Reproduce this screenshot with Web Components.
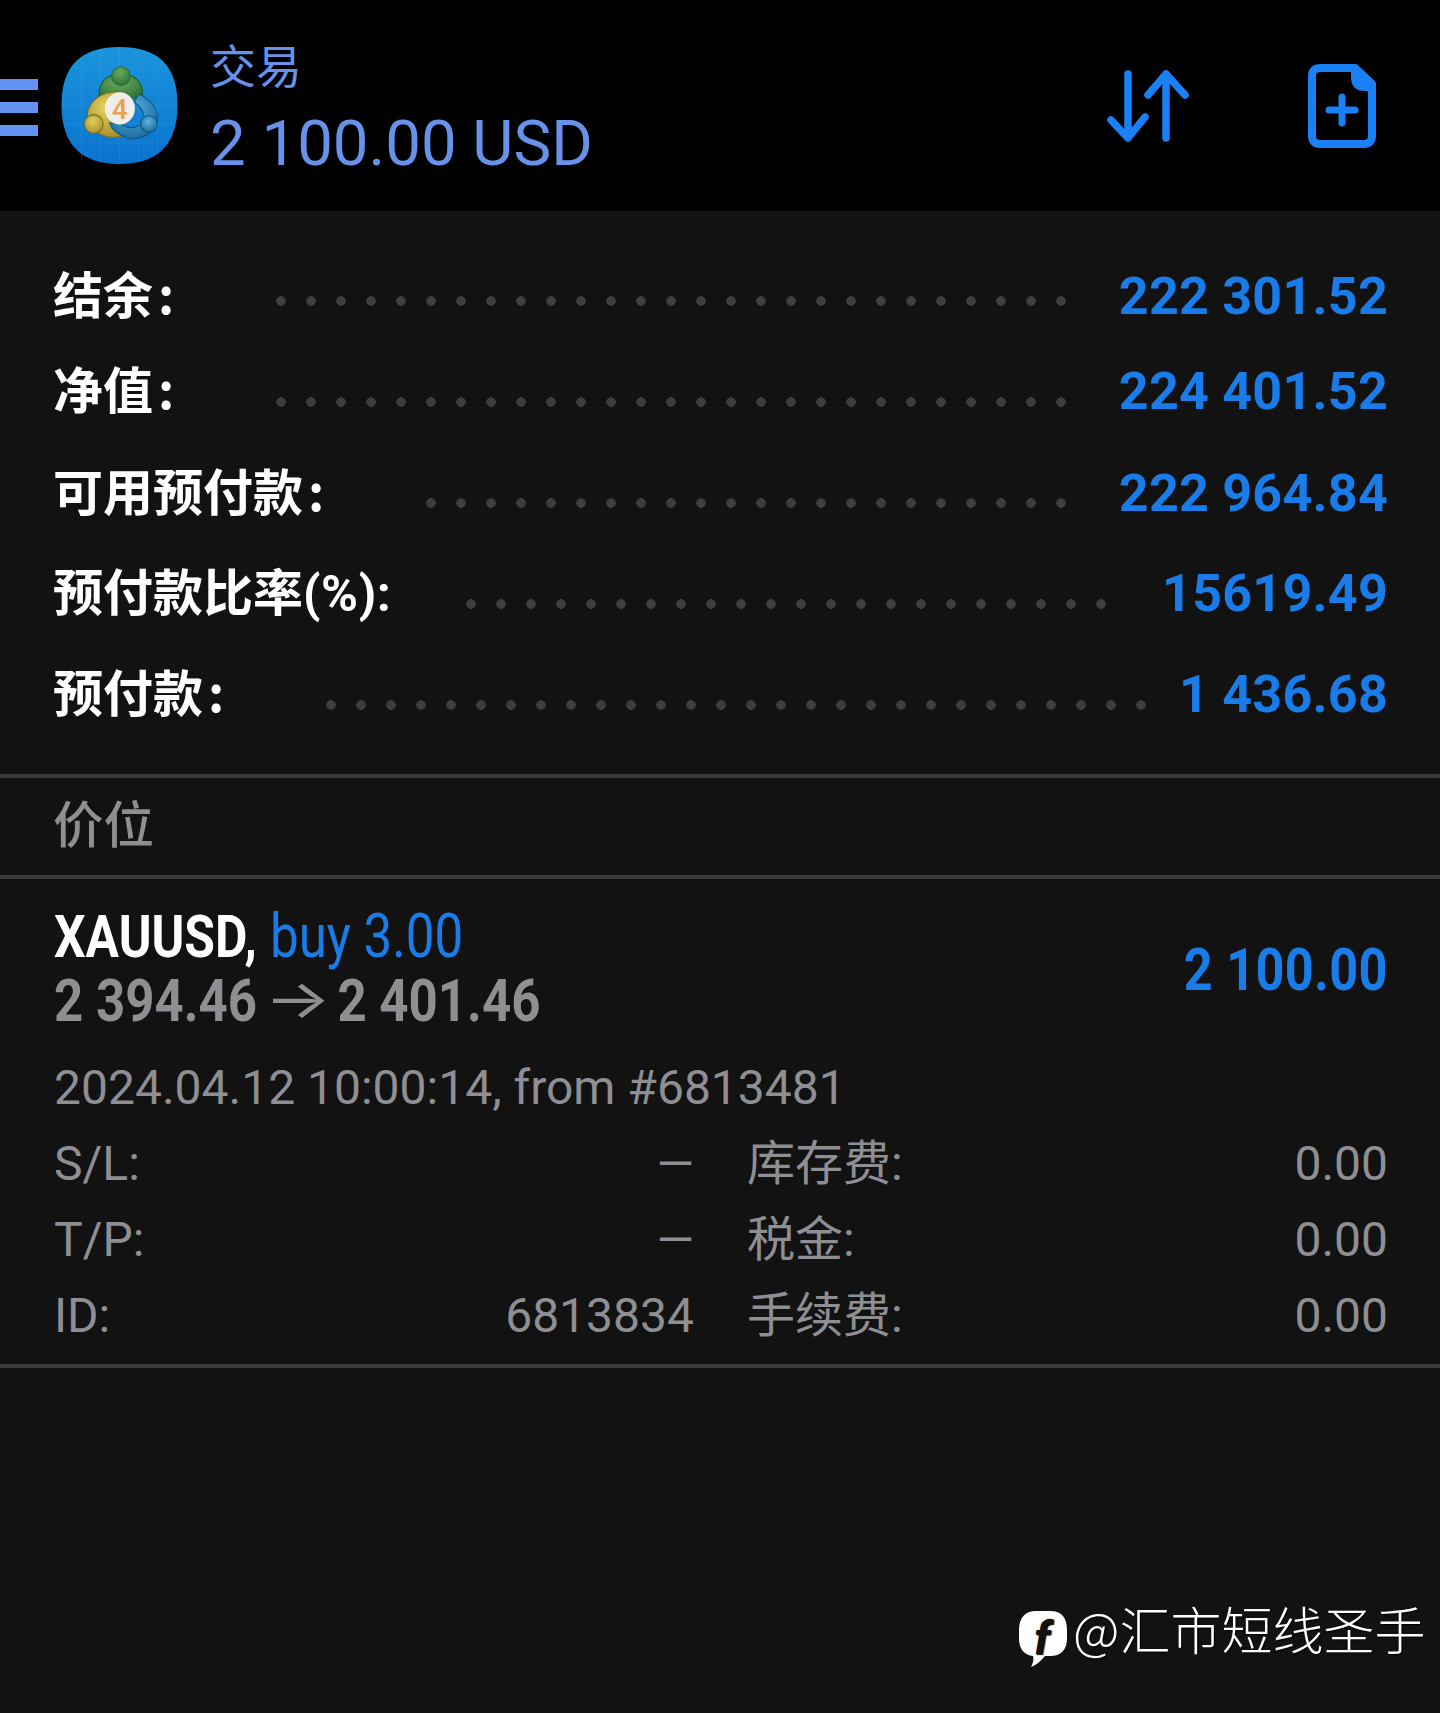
<!DOCTYPE html>
<html lang="zh">
<head>
<meta charset="utf-8">
<title>交易</title>
<style>
  html, body { margin: 0; background: #121212; }
  body { width: 1440px; min-height: 1713px; font-family: Roboto, "Noto Sans CJK SC", sans-serif; position: relative; }
  mt-summary-row .colon { margin-left: 5px; }
  mt-summary-row .latin { font-family: Roboto, sans-serif; line-height: 1; letter-spacing: .6px; }
</style>
</head>
<body>
  <mt-header title="交易" balance="2 100.00 USD"></mt-header>

  <mt-summary>
    <mt-summary-row top="55" dots="27" lead="43" shift="5" value="222 301.52">结余<span class="colon">:</span></mt-summary-row>
    <mt-summary-row top="35" dots="27" lead="43" shift="11" value="224 401.52">净值<span class="colon">:</span></mt-summary-row>
    <mt-summary-row top="42" dots="22" lead="43" shift="10" value="222 964.84">可用预付款<span class="colon">:</span></mt-summary-row>
    <mt-summary-row top="40" dots="22" lead="46" shift="11" value="15619.49">预付款比率<span class="latin">(%):</span></mt-summary-row>
    <mt-summary-row top="41" dots="28" lead="23" shift="11" value="1 436.68">预付款<span class="colon">:</span></mt-summary-row>
  </mt-summary>

  <mt-section>价位</mt-section>

  <mt-position symbol="XAUUSD," side="buy 3.00" from="2 394.46" to="2 401.46" profit="2 100.00" opened="2024.04.12 10:00:14, from #6813481">
    <mt-detail label="S/L:" value="—"></mt-detail>
    <mt-detail label="库存费:" value="0.00"></mt-detail>
    <mt-detail label="T/P:" value="—"></mt-detail>
    <mt-detail label="税金:" value="0.00"></mt-detail>
    <mt-detail label="ID:" value="6813834"></mt-detail>
    <mt-detail label="手续费:" value="0.00"></mt-detail>
  </mt-position>

  <mt-watermark>@汇市短线圣手</mt-watermark>

<script>
const CJK = '"Noto Sans CJK SC"'

class MtLogo extends HTMLElement {
  _root = this.attachShadow({ mode: 'open' })
  _template = this._root.innerHTML = `
    <style>
      :host { display: block; width: 117px; height: 117px; }
      svg { display: block; }
    </style>
    <svg width="117" height="117" viewBox="0 0 116 117">
      <defs>
        <linearGradient id="bg" x1="0" y1="0" x2="0" y2="1">
          <stop offset="0" stop-color="#1b95dc"/>
          <stop offset="1" stop-color="#0a72cf"/>
        </linearGradient>
        <radialGradient id="gr" cx=".45" cy=".3" r=".8">
          <stop offset="0" stop-color="#6cab5e"/>
          <stop offset="1" stop-color="#24692f"/>
        </radialGradient>
        <radialGradient id="ye" cx=".45" cy=".35" r=".8">
          <stop offset="0" stop-color="#e3cf5c"/>
          <stop offset="1" stop-color="#9c8527"/>
        </radialGradient>
        <radialGradient id="bl" cx=".45" cy=".35" r=".8">
          <stop offset="0" stop-color="#58b4e0"/>
          <stop offset="1" stop-color="#125d90"/>
        </radialGradient>
      </defs>
      <path d="M58 0C96 0 116 18 116 58C116 98 96 117 58 117C20 117 0 98 0 58C0 18 20 0 58 0Z" fill="url(#bg)"/>
      <path d="M20 4V113M39 0V117M58 0V117M77 0V117M96 4V113M4 20H112M0 39H116M0 58H116M0 77H116M4 96H112" stroke="#5fc0ee" stroke-opacity=".13" stroke-width="1" fill="none"/>
      <g transform="translate(-2 -1) scale(1.04)">
        <path d="M38 47C38 33 47 27 59 27C71 27 80 33 80 47C80 52 76 54 72 50L46 50C42 54 38 52 38 47Z" fill="url(#gr)" stroke="#1f5a29" stroke-width="1"/>
        <circle cx="59" cy="29" r="9" fill="url(#gr)" stroke="#2c6f35" stroke-width="1"/>
        <path d="M58 44C44 43 30 50 27 64C25 77 36 87 52 88C60 88 64 84 60 80L50 72C46 62 50 54 60 50Z" fill="url(#ye)" stroke="#7d6c1e" stroke-width="1"/>
        <circle cx="33" cy="75" r="9" fill="url(#ye)" stroke="#7d6c1e" stroke-width="1"/>
        <path d="M76 46C88 52 96 62 94 72C92 84 76 92 64 88C56 85 50 80 48 74L58 74C64 80 74 80 80 74C84 66 78 58 72 54Z" fill="url(#bl)" stroke="#0f5584" stroke-width="1"/>
        <circle cx="86" cy="75" r="8" fill="url(#bl)" stroke="#0f5584" stroke-width="1"/>
        <ellipse cx="58" cy="60" rx="14.5" ry="15.5" fill="#f1eeea"/>
        <text x="58" y="70" text-anchor="middle" font-family="Roboto, sans-serif" font-size="27" font-weight="500" fill="#e9a34f">4</text>
      </g>
    </svg>
  `
}
customElements.define('mt-logo', MtLogo)

class MtHeader extends HTMLElement {
  _root = this.attachShadow({ mode: 'open' })
  connectedCallback() {
    this._root.innerHTML = `
      <style>
        :host {
          display: flex;
          align-items: center;
          height: 211px;
          background: #000;
          color: #6792ea;
        }
        .menu { display: flex; flex-direction: column; gap: 12px; width: 38px; margin: 4px 23px 0 0; }
        .menu i { display: block; height: 11px; background: #6292f2; }
        .titles { flex: 1; margin-left: 32px; }
        .title { font: 400 46px/50px ${CJK}, sans-serif; height: 50px; margin-top: 7px; }
        .balance { font: 400 63.5px/74px Roboto, sans-serif; white-space: pre; margin-top: 19px; }
        svg { display: block; flex: none; }
        .sort { margin: 0 115px 0 0; }
        .add { margin: 0 64px 0 0; }
      </style>
      <div class="menu"><i></i><i></i><i></i></div>
      <mt-logo></mt-logo>
      <div class="titles">
        <div class="title">${this.getAttribute('title')}</div>
        <div class="balance">${this.getAttribute('balance')}</div>
      </div>
      <svg class="sort" width="88" height="76" viewBox="0 0 88 76" fill="none" stroke="#1a80f5" stroke-width="7.5" stroke-linecap="round" stroke-linejoin="round">
        <path d="M23 6V70M6 52L23 70L40 49"/>
        <path d="M61 70V6M43 27L61 6L80 27"/>
      </svg>
      <svg class="add" width="68" height="84" viewBox="0 0 68 84" fill="none" stroke="#1a80f5" stroke-linecap="round" stroke-linejoin="round">
        <path d="M12 4H47L64 20V72C64 77 61 80 56 80H12C7 80 4 77 4 72V12C4 7 7 4 12 4Z" stroke-width="8"/>
        <path d="M45 5V13C45 21 49 25 57 25H64L45 5Z" fill="#1a80f5" stroke-width="4"/>
        <path d="M34 33V59M21 46H47" stroke-width="7"/>
      </svg>
    `
  }
}
customElements.define('mt-header', MtHeader)

class MtSummary extends HTMLElement {
  _root = this.attachShadow({ mode: 'open' })
  _template = this._root.innerHTML = `
    <style>
      :host { display: block; height: 508px; }
    </style>
    <slot></slot>
  `
}
customElements.define('mt-summary', MtSummary)

class MtSummaryRow extends HTMLElement {
  _root = this.attachShadow({ mode: 'open' })
  connectedCallback() {
    const dots = +this.getAttribute('dots')
    this._root.innerHTML = `
      <style>
        :host {
          display: flex;
          align-items: center;
          height: 60px;
          padding: 0 52px 0 53px;
          margin-top: ${this.getAttribute('top')}px;
        }
        .label { flex: 1; font: 700 50px/60px ${CJK}, sans-serif; color: #fff; white-space: nowrap; margin-bottom: 9px; }
        .dots {
          width: ${dots * 30}px;
          height: 10px;
          margin-right: ${this.getAttribute('lead')}px;
          transform: translateY(${this.getAttribute('shift')}px);
          background: radial-gradient(circle at center, #3e3e3e 4.5px, transparent 5px) 0 0 / 30px 10px repeat-x;
        }
        .value { font: 700 52px/60px Roboto, sans-serif; letter-spacing: .25px; color: #1a7ce8; white-space: pre; margin-top: 2px; }
      </style>
      <div class="label"><slot></slot></div>
      <div class="dots"></div>
      <div class="value">${this.getAttribute('value')}</div>
    `
  }
}
customElements.define('mt-summary-row', MtSummaryRow)

class MtSection extends HTMLElement {
  _root = this.attachShadow({ mode: 'open' })
  _template = this._root.innerHTML = `
    <style>
      :host {
        display: block;
        height: 97px;
        padding-left: 53px;
        border-top: 4px solid #3a3a3a;
        border-bottom: 4px solid #3a3a3a;
        font: 500 50.5px/86px ${CJK}, sans-serif;
        color: #8e8e93;
      }
    </style>
    <slot></slot>
  `
}
customElements.define('mt-section', MtSection)

class MtPosition extends HTMLElement {
  _root = this.attachShadow({ mode: 'open' })
  connectedCallback() {
    const attr = n => this.getAttribute(n)
    this._root.innerHTML = `
      <style>
        :host {
          display: block;
          height: 489px;
          padding: 0 52px 0 54px;
          border-bottom: 4px solid #3a3a3a;
          box-sizing: border-box;
          color: #8e8e93;
        }
        .top { display: flex; justify-content: space-between; align-items: center; height: 179px; }
        .line { height: 64.5px; font: 700 60px/64.5px Roboto, sans-serif; white-space: nowrap; width: 0; }
        .scaled { display: inline-block; white-space: pre; transform-origin: left center; transform: scaleX(.83); }
        .sym { color: #fff; }
        .side { color: #1a7ce8; font-weight: 400; font-size: 61.5px; margin-left: 1px; }
        .prices { transform: scaleX(.85); }
        .arrow { display: inline-block; font: 400 54px/64.5px Inter, sans-serif; margin: 0 21px 0 22px; transform: translateY(-3px) scaleX(1.53); }
        .profit { font: 700 60px/65px Roboto, sans-serif; letter-spacing: .5px; color: #1a7ce8; white-space: pre; transform: scaleX(.84); transform-origin: right center; margin-top: 1px; }
        .opened { font: 400 48px/60px Roboto, sans-serif; white-space: pre; height: 60px; }
        .grid { display: grid; grid-template-columns: 640px 1fr; column-gap: 53px; row-gap: 16px; margin-top: 16px; }
      </style>
      <div class="top">
        <div class="lines">
          <div class="line"><span class="scaled"><span class="sym">${attr('symbol')}</span> <span class="side">${attr('side')}</span></span></div>
          <div class="line"><span class="scaled prices">${attr('from')}<span class="arrow">→</span>${attr('to')}</span></div>
        </div>
        <div class="profit">${attr('profit')}</div>
      </div>
      <div class="opened">${attr('opened')}</div>
      <div class="grid"><slot></slot></div>
    `
  }
}
customElements.define('mt-position', MtPosition)

class MtDetail extends HTMLElement {
  _root = this.attachShadow({ mode: 'open' })
  connectedCallback() {
    this._root.innerHTML = `
      <style>
        :host {
          display: flex;
          justify-content: space-between;
          align-items: center;
          height: 60px;
          font: 400 48px/60px Roboto, ${CJK}, sans-serif;
          color: #8e8e93;
          white-space: nowrap;
        }
      </style>
      <span>${this.getAttribute('label')}</span>
      <span>${this.getAttribute('value')}</span>
    `
  }
}
customElements.define('mt-detail', MtDetail)

class MtWatermark extends HTMLElement {
  _root = this.attachShadow({ mode: 'open' })
  _template = this._root.innerHTML = `
    <style>
      :host {
        position: absolute;
        left: 1018px;
        top: 1599px;
        display: flex;
        align-items: flex-start;
        gap: 5px;
        font: 300 51px/58px ${CJK}, sans-serif;
        color: #fff;
        white-space: nowrap;
        text-shadow: 1px 1px 1px #000;
      }
      svg { display: block; flex: none; margin-top: 11px; }
    </style>
    <svg width="50" height="58" viewBox="0 0 50 58">
      <path d="M18 1H32C44 1 49 8 49 20V28C49 40 43 46 32 46H27C23 51 18 55 13 57C15 53 16 50 15 46C6 45 1 39 1 28V20C1 8 7 1 18 1Z" fill="#fff"/>
      <text x="24" y="44" text-anchor="middle" font-family="Roboto, sans-serif" font-size="46" font-weight="700" font-style="italic" fill="#121212">f</text>
    </svg>
    <span><slot></slot></span>
  `
}
customElements.define('mt-watermark', MtWatermark)
</script>
</body>
</html>
